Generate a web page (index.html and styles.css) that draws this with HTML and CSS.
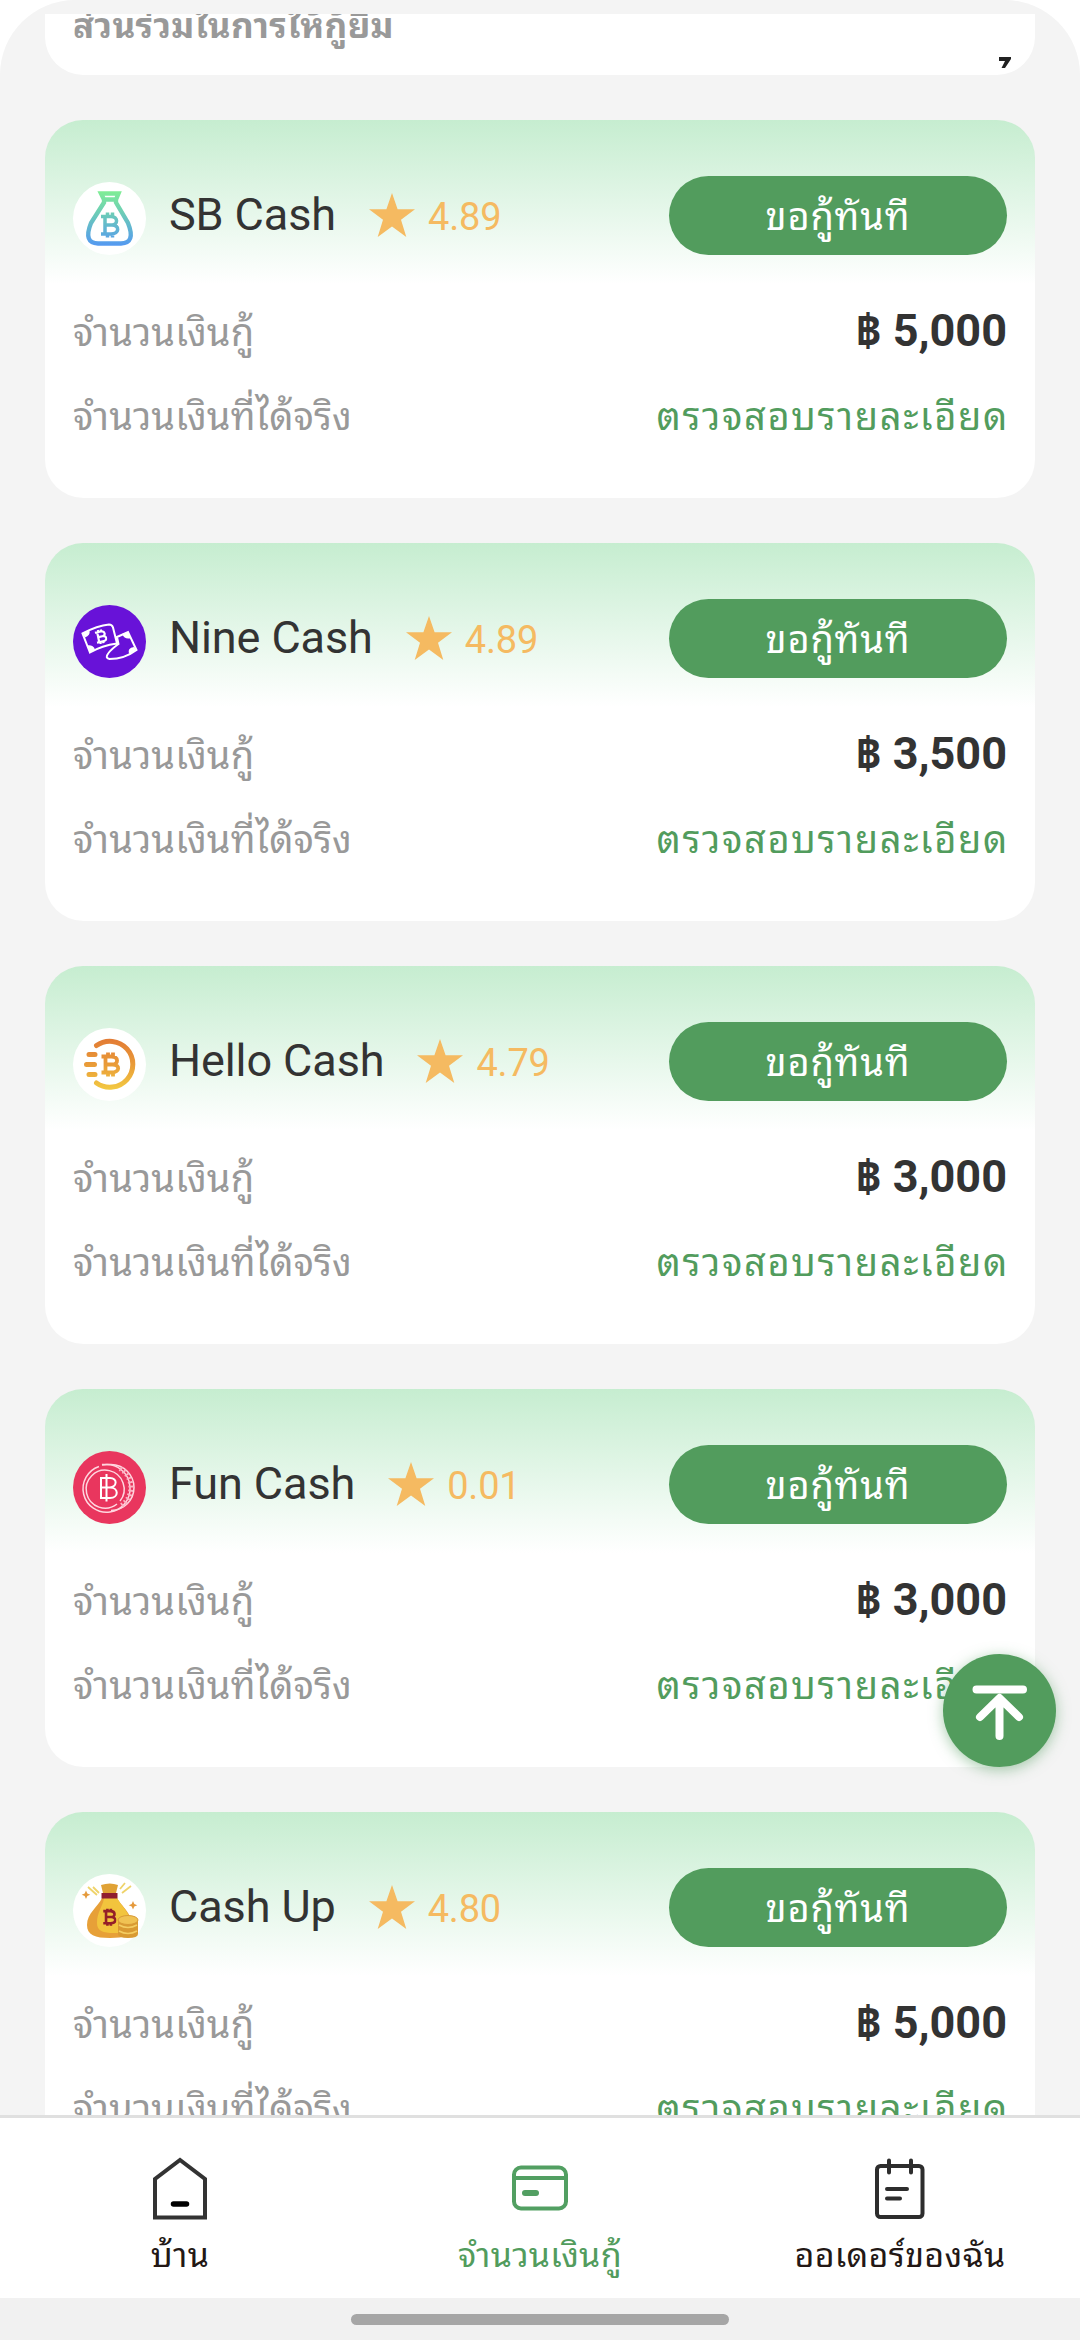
FILE: index.html
```html
<!DOCTYPE html>
<html lang="th">
<head>
<meta charset="utf-8">
<title>จำนวนเงินกู้</title>
<link rel="stylesheet" href="styles.css">
</head>
<body>
<svg class="defs" width="0" height="0" aria-hidden="true">
  <defs>
    <linearGradient id="cool" gradientUnits="userSpaceOnUse" x1="0" y1="10" x2="0" y2="63"><stop offset="0" stop-color="#7fec96"/><stop offset=".5" stop-color="#68c4c0"/><stop offset="1" stop-color="#559af0"/></linearGradient>
    <linearGradient id="warm" gradientUnits="userSpaceOnUse" x1="0" y1="10" x2="0" y2="63"><stop offset="0" stop-color="#e27a35"/><stop offset=".5" stop-color="#e99b38"/><stop offset="1" stop-color="#f3cc42"/></linearGradient>
    <symbol id="star" viewBox="0 0 46 44"><path d="M23 0l5.6 16.300H46L32 26.800 37.300 44 23 33.600 8.700 44 14 26.800 0 16.300h17.400z"/></symbol>
    <symbol id="bit" viewBox="0 0 20 26"><path d="M1 4.500h10.500c7.500 0 7.500 8.500 1 8.500 8 0 8 9-1 9H1M5 4.500v17.500M5 13h7.500M7 1v4M12 1v4M7 21.500v4M12 21.500v4" fill="none" stroke="currentColor" stroke-width="3.800"/></symbol>
  </defs>
</svg>
<div class="screen">
  <main class="list">
    <section class="intro">
      <p class="intro-text">ส่วนร่วมในการให้กู้ยืม</p>
      <svg class="intro-mark" viewBox="0 0 12 12"><path d="M0 0h12v2L6 11H2.500L6 4H0z"/></svg>
    </section>

    <article class="card">
      <header class="head">
        <svg class="logo" viewBox="0 0 73 73"><circle cx="36.500" cy="36.500" r="36.500" fill="#fff"/><path d="M31 17.500h12l2.500-6H28zM31 17.500v3L18 41q-8 20 7 20.500h23q15-.5 7-20.500L43 20.500v-3" fill="none" stroke="url(#cool)" stroke-width="4.400"/><path d="M28 34.500h10c7.500 0 7 8.500 1 8.500 8 0 7.500 9-1 9H28M32 34.500v17.500M31 43h8M34.500 30.500v4M39.500 30.500v4M34.500 51.500v4M39.500 51.500v4" fill="none" stroke="url(#cool)" stroke-width="3.500"/></svg>
        <h2 class="name">SB Cash</h2>
        <svg class="star"><use href="#star"/></svg><span class="score">4.89</span>
        <button class="apply">ขอกู้ทันที</button>
      </header>
      <div class="row"><span class="label">จำนวนเงินกู้</span><strong class="amount">฿ 5,000</strong></div>
      <div class="row"><span class="label">จำนวนเงินที่ได้จริง</span><a class="link">ตรวจสอบรายละเอียด</a></div>
    </article>

    <article class="card">
      <header class="head">
        <svg class="logo" viewBox="0 0 73 73"><circle cx="36.500" cy="36.500" r="36.500" fill="#6812d8"/><g fill="none" stroke="#fff" stroke-width="2"><path d="M9.500 28.500q15-8 26.500-9 3 0 4 3l4 16q-15 2-27 9zM44 32l11-5 8.500 18q-12 9-27 9-5-1-1-6 3-4 10-9z"/></g><path d="M9.500 28.500l7-3q1 5-4.500 7zM17 47.500l-3-7q6-1 8 4zM49 29l6-2 3 6q-6 2-9-4zM63 45l-7 4q-2-6 5-7z" fill="#fff"/><svg x="21" y="24" width="14" height="15" viewBox="0 0 20 26" color="#fff"><use href="#bit" transform="rotate(-12 10 13)"/></svg></svg>
        <h2 class="name">Nine Cash</h2>
        <svg class="star"><use href="#star"/></svg><span class="score">4.89</span>
        <button class="apply">ขอกู้ทันที</button>
      </header>
      <div class="row"><span class="label">จำนวนเงินกู้</span><strong class="amount">฿ 3,500</strong></div>
      <div class="row"><span class="label">จำนวนเงินที่ได้จริง</span><a class="link">ตรวจสอบรายละเอียด</a></div>
    </article>

    <article class="card">
      <header class="head">
        <svg class="logo" viewBox="0 0 73 73"><circle cx="36.500" cy="36.500" r="36.500" fill="#fff"/><path d="M23.500 17.500a23 23 0 1 1 0 37.500M16 26.500h6M13.500 36.500h8M16 46.500h6" fill="none" stroke="url(#warm)" stroke-width="5" stroke-linecap="round"/><path d="M28.500 28.500h10c7.500 0 7 8 1 8 8 0 7.500 8-1 8h-10M32.500 28.500v16M32 36.500h8M35 24.500v4M40 24.500v4M35 44.500v4M40 44.500v4" fill="none" stroke="url(#warm)" stroke-width="3.800"/></svg>
        <h2 class="name">Hello Cash</h2>
        <svg class="star"><use href="#star"/></svg><span class="score">4.79</span>
        <button class="apply">ขอกู้ทันที</button>
      </header>
      <div class="row"><span class="label">จำนวนเงินกู้</span><strong class="amount">฿ 3,000</strong></div>
      <div class="row"><span class="label">จำนวนเงินที่ได้จริง</span><a class="link">ตรวจสอบรายละเอียด</a></div>
    </article>

    <article class="card">
      <header class="head">
        <svg class="logo" viewBox="0 0 73 73"><circle cx="36.500" cy="36.500" r="36.500" fill="#e9365e"/><g fill="none" stroke="#ffd6df" stroke-width="1.500"><path d="M26 15.500A23.500 23.500 0 1 0 57 36.500 23.500 23.500 0 0 0 29 14"/><path d="M44 53A19 19 0 1 1 47 50"/><path d="M29 13.500h9a23 23 0 0 1 0 46"/></g><path d="M44 17.500a22 22 0 0 1 0 38" fill="none" stroke="#fbb4c4" stroke-width="5" stroke-dasharray="1.800 2.400" transform="translate(3 0)"/><path d="M27 27h10c8 0 7 9 0 9.500 9 0 9 10.500 0 10.500H28V27M28 36.500h9M33.500 23v27.500" fill="none" stroke="#fff" stroke-width="2"/></svg>
        <h2 class="name">Fun Cash</h2>
        <svg class="star"><use href="#star"/></svg><span class="score">0.01</span>
        <button class="apply">ขอกู้ทันที</button>
      </header>
      <div class="row"><span class="label">จำนวนเงินกู้</span><strong class="amount">฿ 3,000</strong></div>
      <div class="row"><span class="label">จำนวนเงินที่ได้จริง</span><a class="link">ตรวจสอบรายละเอียด</a></div>
    </article>

    <article class="card">
      <header class="head">
        <svg class="logo" viewBox="0 0 73 73"><circle cx="36.500" cy="36.500" r="36.500" fill="#fff"/><path d="M29 24h15c5 9 16 16 15 29-1 8-7 11-22 11s-23-3-23-13c0-12 11-18 15-27z" fill="#e7a038"/><path d="M31 24h13c5 9 14 16 14 27-1 8-7 8-17 8-11 0-17-2-17-10 0-11 6-17 7-25z" fill="#f2c43d"/><path d="M28 11q9-3 17 0l-2 8H30z" fill="#e0a235"/><path d="M28.500 19h16v5.500h-16z" fill="#8f1d30"/><path d="M20 13l6 6M15 13l9 8M52 9l-5 6M58 12l-9 7" stroke="#efd36a" stroke-width="1.800"/><path d="M13 16.500l1.300 3 3 1.300-3 1.300-1.300 3-1.300-3-3-1.300 3-1.300zM60 27l1.300 3 3 1.300-3 1.300-1.300 3-1.300-3-3-1.300 3-1.300z" fill="#e59a3c"/><svg x="29" y="34" width="15" height="18" viewBox="0 0 20 26" color="#941f28"><use href="#bit"/></svg><path d="M45 46v14q0 4 10 4t10-4V46z" fill="#d99a32"/><path d="M46 51q9 5 18 0M46 57q9 5 18 0" fill="none" stroke="#f4cd62" stroke-width="1.600"/><ellipse cx="55" cy="46" rx="10" ry="4.500" fill="#f0c253" stroke="#d89a35"/></svg>
        <h2 class="name">Cash Up</h2>
        <svg class="star"><use href="#star"/></svg><span class="score">4.80</span>
        <button class="apply">ขอกู้ทันที</button>
      </header>
      <div class="row"><span class="label">จำนวนเงินกู้</span><strong class="amount">฿ 5,000</strong></div>
      <div class="row"><span class="label">จำนวนเงินที่ได้จริง</span><a class="link">ตรวจสอบรายละเอียด</a></div>
    </article>
  </main>

  <nav class="tabs">
    <a class="tab"><svg class="tab-icon" viewBox="0 0 64 64"><path d="M7 62.500V24L32 5l25 19v38.500z" transform="translate(0 -1)" fill="none" stroke="#333" stroke-width="4"/><path d="M25.500 48h13" stroke="#000" stroke-width="5.500" stroke-linecap="round"/></svg>บ้าน</a>
    <a class="tab active"><svg class="tab-icon" viewBox="0 0 64 64"><g fill="none" stroke="#529f62" stroke-width="4"><rect x="6" y="11.500" width="52" height="41" rx="7"/><path d="M6 22h52"/><path d="M17 37h11" stroke-width="6" stroke-linecap="round"/></g></svg>จำนวนเงินกู้</a>
    <a class="tab"><svg class="tab-icon" viewBox="0 0 64 64"><g fill="none" stroke="#2d2d2d" stroke-width="4" stroke-linecap="round"><rect x="9" y="10" width="45.500" height="51" rx="3.500"/><path d="M21 4.500v12M43 4.500v12M19 33h20M19 42.500h13"/></g></svg>ออเดอร์ของฉัน</a>
  </nav>
  <footer class="gesture"><span class="pill"></span></footer>

  <button class="to-top" aria-label="top"><svg viewBox="0 0 113 113"><path d="M33.500 35.500h46.500M56.500 45v37M37 63l19.500-19L76 63" fill="none" stroke="#fff" stroke-width="8" stroke-linecap="round" stroke-linejoin="round"/></svg></button>
</div>
</body>
</html>
```
FILE: styles.css
```css
* { box-sizing: border-box; }
body { margin: 0; background: #fff; font-family: Roboto, "Noto Sans Thai Looped", "Noto Looped Thai", "Droid Sans Thai", Loma, Waree, Garuda, "Noto Sans", sans-serif; }
.defs { position: absolute; }
.screen {
  position: relative;
  display: flex;
  flex-direction: column;
  width: 1080px;
  height: 2340px;
  padding-top: 14px;
  overflow: hidden;
  background: #f4f4f4;
  border-radius: 75px 75px 0 0;
}
.list {
  flex: 1;
  min-height: 0;
  overflow: hidden;
  display: flex;
  flex-direction: column;
  gap: 45px;
  padding: 0 45px;
}
.intro {
  flex: none;
  display: flex;
  justify-content: space-between;
  align-items: flex-start;
  height: 61px;
  padding: 0 24px 0 28px;
  overflow: hidden;
  background: #fff;
  border-radius: 0 0 38px 38px;
}
.intro-text { margin: -12px 0 0; font-size: 35px; line-height: 50px; font-weight: 700; letter-spacing: .3px; color: #999; white-space: nowrap; }
.intro-mark { width: 12px; height: 12px; margin-top: 43px; fill: #222; }
.card {
  flex: none;
  height: 378px;
  padding: 56px 28px 0;
  border-radius: 38px;
  background: #fff linear-gradient(#c6edd0, #fff) no-repeat 0 0 / 100% 164px;
}
.head { display: flex; align-items: center; height: 79px; margin-bottom: 38px; }
.logo { width: 73px; height: 73px; margin-top: 6px; }
.name { margin: -2px 0 0 23px; font-size: 45px; line-height: 60px; font-weight: 400; letter-spacing: -.1px; color: #333; white-space: nowrap; }
.star { width: 46px; height: 44px; margin: -1px 0 0 33px; fill: #f5ba61; }
.score { margin: 2px 0 0 13px; font-size: 38px; line-height: 50px; letter-spacing: -.2px; color: #f5ba61; }
.apply {
  width: 338px;
  height: 79px;
  margin-left: auto;
  padding: 3px 0 0;
  border: 0;
  border-radius: 40px;
  background: #529c5d;
  color: #fff;
  font-family: inherit;
  font-size: 38px;
  line-height: 76px;
  letter-spacing: .8px;
}
.row { display: flex; justify-content: space-between; align-items: baseline; height: 84px; line-height: 76px; font-size: 38px; white-space: nowrap; }
.row + .row { padding-top: 2px; }
.label { color: #999; letter-spacing: .1px; }
.amount { font-size: 45px; color: #333; }
.link { color: #529c5d; letter-spacing: 1.65px; margin-right: -2px; }
.tabs { flex: none; display: flex; height: 183px; border-top: 3px solid #e0e0e0; background: #fff; }
.tab { flex: 1; display: flex; flex-direction: column; align-items: center; padding-top: 38px; font-size: 34px; line-height: 70px; letter-spacing: .3px; color: #231815; white-space: nowrap; }
.tab-icon { flex: none; width: 64px; height: 64px; }
.active { color: #529c5d; }
.gesture { flex: none; display: flex; justify-content: center; align-items: flex-start; height: 42px; padding-top: 16px; background: #f1f1f1; }
.pill { width: 378px; height: 11px; border-radius: 6px; background: #a6a6a6; }
.to-top {
  position: absolute;
  left: 943px;
  top: 1654px;
  width: 113px;
  height: 113px;
  padding: 0;
  border: 0;
  border-radius: 50%;
  background: #529c5d;
  box-shadow: 0 3px 14px rgba(82, 156, 93, .5);
}
.to-top svg { display: block; width: 113px; height: 113px; }
```
